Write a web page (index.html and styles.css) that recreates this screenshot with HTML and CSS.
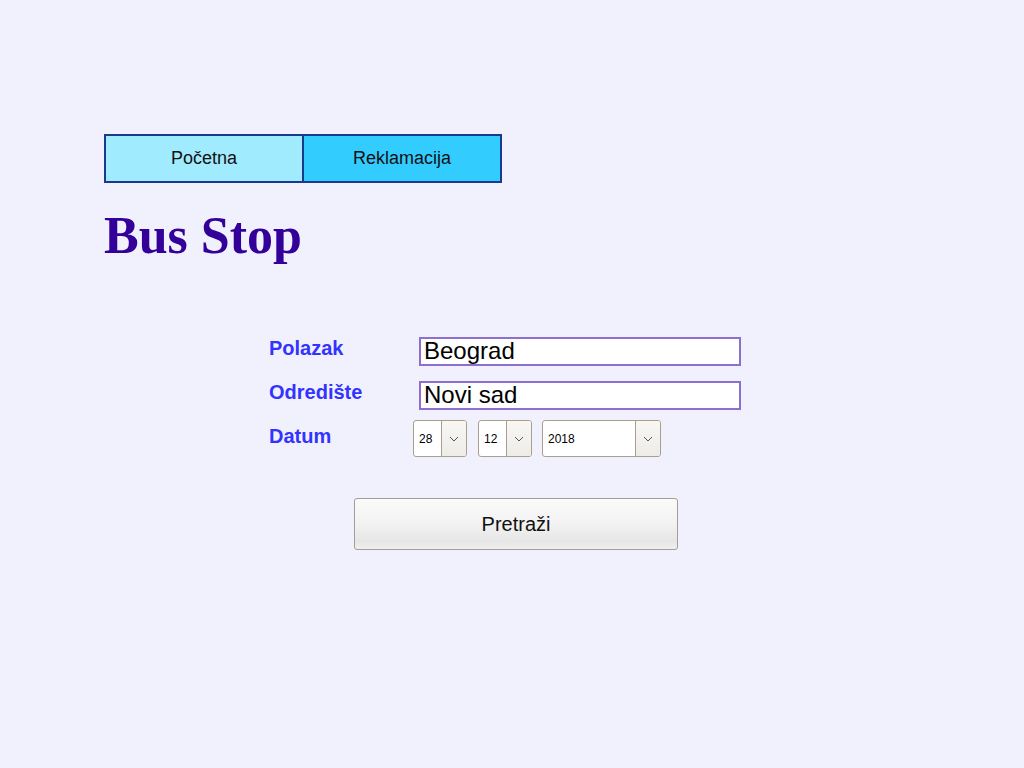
FILE: index.html
```html
<!DOCTYPE html>
<html lang="sr">
<head>
<meta charset="utf-8">
<title>Bus Stop</title>
<link rel="stylesheet" href="styles.css">
</head>
<body>
<div class="page">
  <nav class="tabs">
    <a class="tab tab-home">Početna</a>
    <a class="tab tab-claim">Reklamacija</a>
  </nav>
  <h1 class="title">Bus Stop</h1>
  <form class="search">
    <div class="grid">
      <label class="lbl">Polazak</label>
      <div class="field"><div class="input">Beograd</div></div>
      <label class="lbl">Odredište</label>
      <div class="field"><div class="input">Novi sad</div></div>
      <label class="lbl">Datum</label>
      <div class="field dates">
        <div class="sel sel-sm"><span class="val">28</span><span class="drop"><svg width="10" height="6" viewBox="0 0 10 6"><path d="M1 1l4 4 4-4" fill="none" stroke="#555" stroke-width="1"/></svg></span></div>
        <div class="sel sel-sm"><span class="val">12</span><span class="drop"><svg width="10" height="6" viewBox="0 0 10 6"><path d="M1 1l4 4 4-4" fill="none" stroke="#555" stroke-width="1"/></svg></span></div>
        <div class="sel sel-lg"><span class="val">2018</span><span class="drop"><svg width="10" height="6" viewBox="0 0 10 6"><path d="M1 1l4 4 4-4" fill="none" stroke="#555" stroke-width="1"/></svg></span></div>
      </div>
    </div>
    <div class="actions"><div class="btn">Pretraži</div></div>
  </form>
</div>
</body>
</html>
```
FILE: styles.css
```css
html, body {
  margin: 0;
  padding: 0;
  background: #f1f1fd;
}
body {
  font-family: "Liberation Sans", Arial, sans-serif;
}
.page {
  padding: 134px 0 0 104px;
}
.tabs {
  display: flex;
  width: fit-content;
  border: 2px solid #1b3a8e;
  background: #1b3a8e;
  gap: 2px;
}
.tab {
  width: 196px;
  height: 45px;
  display: flex;
  align-items: center;
  justify-content: center;
  font-size: 18px;
  color: #111;
}
.tab-home { background: #a0ecfe; }
.tab-claim { background: #33ccff; }
.title {
  margin: 23px 0 0 0;
  font-family: "Liberation Serif", "Times New Roman", serif;
  font-size: 52px;
  line-height: 60px;
  font-weight: bold;
  color: #330099;
}
.search {
  margin: 71px 0 0 165px;
}
.grid {
  display: grid;
  grid-template-columns: 150px 322px;
  grid-auto-rows: 44px;
}
.lbl {
  font-size: 20px;
  line-height: 23px;
  font-weight: bold;
  color: #3333ff;
}
.input {
  box-sizing: border-box;
  height: 29px;
  border: 2px solid #8c6fd1;
  background: #fff;
  padding: 0 3px;
  font-size: 24px;
  line-height: 24px;
  color: #000;
}
.dates {
  display: flex;
  gap: 11px;
  margin: -5px 0 0 -6px;
}
.sel {
  box-sizing: border-box;
  height: 37px;
  display: flex;
  border: 1px solid #a89f91;
  border-radius: 3px;
  background: #fff;
  overflow: hidden;
}
.sel-sm { width: 54px; }
.sel-lg { width: 119px; margin-left: -1px; }
.val {
  flex: 1;
  display: flex;
  align-items: center;
  padding-left: 5px;
  font-size: 12px;
  color: #000;
}
.drop {
  width: 24px;
  display: flex;
  align-items: center;
  justify-content: center;
  border-left: 1px solid #a89f91;
  background: linear-gradient(#f8f7f4, #eeece7);
}
.actions {
  margin: 29px 0 0 85px;
}
.btn {
  box-sizing: border-box;
  width: 324px;
  height: 52px;
  border: 1px solid #a59d92;
  border-radius: 3px;
  background: linear-gradient(#fbfbfb 0%, #f2f2f2 50%, #e6e6e6 85%, #f0f0f0 100%);
  display: flex;
  align-items: center;
  justify-content: center;
  font-size: 20px;
  color: #111;
}
```
